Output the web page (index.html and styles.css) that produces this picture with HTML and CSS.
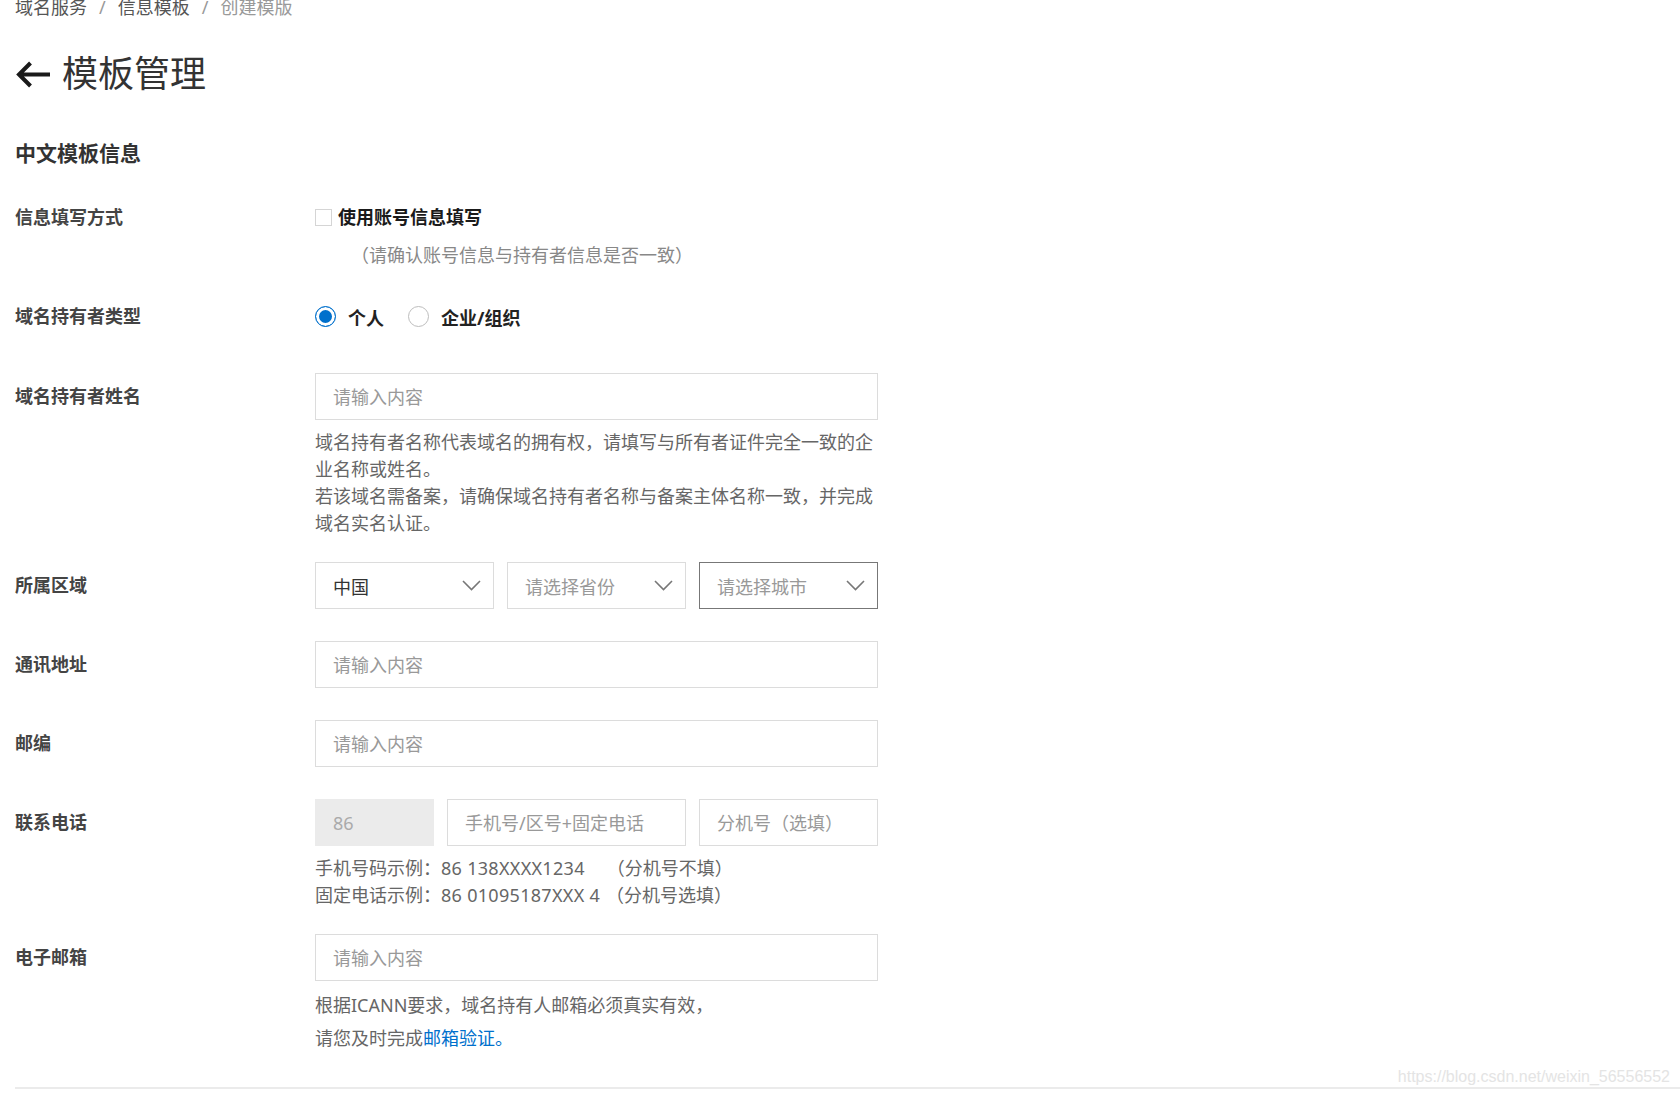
FILE: index.html
```html
<!DOCTYPE html>
<html lang="zh-CN">
<head>
    <meta charset="UTF-8">
    <meta name="viewport" content="width=device-width, initial-scale=1.0">
    <title>模板管理</title>
    <link rel="stylesheet" href="styles.css">
</head>
<body>
<div class="page">

    <div class="breadcrumb">
        <span>域名服务</span><span class="sep">/</span><span>信息模板</span><span class="sep">/</span><span class="current">创建模版</span>
    </div>

    <div class="page-title">
        <svg class="back-icon" width="36" height="27" viewBox="0 0 36 27">
            <path d="M35 13.5H4M15.5 2L4 13.5 15.5 25" fill="none" stroke="#1a1a1a" stroke-width="4"/>
        </svg>
        <h1>模板管理</h1>
    </div>

    <h2 class="section-title">中文模板信息</h2>

    <div class="form">
        <div class="row row-check">
            <div class="row-label line">信息填写方式</div>
            <div class="row-field">
                <label class="checkbox"><span class="box"></span>使用账号信息填写</label>
                <div class="check-note">（请确认账号信息与持有者信息是否一致）</div>
            </div>
        </div>

        <div class="row row-radio">
            <div class="row-label line">域名持有者类型</div>
            <div class="row-field radio-group">
                <label class="radio"><span class="dot checked"></span>个人</label>
                <label class="radio"><span class="dot"></span>企业/组织</label>
            </div>
        </div>

        <div class="row row-help">
            <div class="row-label">域名持有者姓名</div>
            <div class="row-field">
                <input class="input" type="text" placeholder="请输入内容">
                <div class="help">
                    域名持有者名称代表域名的拥有权，请填写与所有者证件完全一致的企业名称或姓名。<br>
                    若该域名需备案，请确保域名持有者名称与备案主体名称一致，并完成域名实名认证。
                </div>
            </div>
        </div>

        <div class="row">
            <div class="row-label">所属区域</div>
            <div class="row-field select-group">
                <div class="select filled">中国
                    <svg class="chevron" width="19" height="11" viewBox="0 0 19 11"><path d="M1 1l8.5 8.5L18 1" fill="none" stroke="#777" stroke-width="1.6"/></svg>
                </div>
                <div class="select">请选择省份
                    <svg class="chevron" width="19" height="11" viewBox="0 0 19 11"><path d="M1 1l8.5 8.5L18 1" fill="none" stroke="#777" stroke-width="1.6"/></svg>
                </div>
                <div class="select active">请选择城市
                    <svg class="chevron" width="19" height="11" viewBox="0 0 19 11"><path d="M1 1l8.5 8.5L18 1" fill="none" stroke="#777" stroke-width="1.6"/></svg>
                </div>
            </div>
        </div>

        <div class="row">
            <div class="row-label">通讯地址</div>
            <div class="row-field">
                <input class="input" type="text" placeholder="请输入内容">
            </div>
        </div>

        <div class="row">
            <div class="row-label">邮编</div>
            <div class="row-field">
                <input class="input" type="text" placeholder="请输入内容">
            </div>
        </div>

        <div class="row row-help">
            <div class="row-label">联系电话</div>
            <div class="row-field">
                <div class="phone-group">
                    <input class="input phone-code" type="text" value="86" disabled>
                    <input class="input phone-num" type="text" placeholder="手机号/区号+固定电话">
                    <input class="input phone-ext" type="text" placeholder="分机号（选填）">
                </div>
                <div class="help">
                    手机号码示例：<span class="num">86 138XXXX1234</span><span class="gap-wide"></span>（分机号不填）<br>
                    固定电话示例：<span class="num">86 01095187XXX 4</span><span class="gap-narrow"></span>（分机号选填）
                </div>
            </div>
        </div>

        <div class="row">
            <div class="row-label">电子邮箱</div>
            <div class="row-field">
                <input class="input" type="text" placeholder="请输入内容">
                <div class="help help-email">
                    根据ICANN要求，域名持有人邮箱必须真实有效，<br>
                    请您及时完成<a class="link" href="#">邮箱验证。</a>
                </div>
            </div>
        </div>

        <div class="form-end"></div>
    </div>

    <div class="watermark">https://blog.csdn.net/weixin_56556552</div>
</div>
</body>
</html>
```

FILE: styles.css
```css
* {
    margin: 0;
    padding: 0;
    box-sizing: border-box;
}

body {
    font-family: "Noto Sans", "Noto Sans CJK SC", sans-serif;
    font-size: 18px;
    color: #333;
    background-color: #fff;
}

.page {
    position: relative;
    height: 1094px;
    padding-left: 15px;
    overflow: hidden;
}

/* fil d'ariane */
.breadcrumb {
    line-height: 15px;
    color: #555;
}

.breadcrumb .sep {
    margin: 0 12px;
    color: #999;
}

.breadcrumb .current {
    color: #999;
}

.page-title {
    display: flex;
    align-items: center;
    gap: 11px;
    margin-top: 37px;
    height: 44px;
}

.page-title h1 {
    font-size: 36px;
    font-weight: normal;
    line-height: 44px;
    color: #333;
}

.section-title {
    margin-top: 43px;
    font-size: 21px;
    font-weight: bold;
    line-height: 28px;
    color: #333;
}

/* formulaire */
.form {
    margin-top: 37px;
}

.row {
    display: flex;
    margin-bottom: 32px;
}

.row-check {
    margin-bottom: 34px;
}

.row-radio {
    margin-bottom: 43px;
}

.row-help {
    margin-bottom: 25px;
}

.row-label {
    width: 300px;
    flex-shrink: 0;
    font-weight: bold;
    line-height: 47px;
    color: #444;
}

.row-label.line {
    line-height: 27px;
}

.row-field {
    width: 563px;
}

.checkbox {
    display: flex;
    align-items: center;
    line-height: 27px;
    font-weight: bold;
    color: #1a1a1a;
}

.checkbox .box {
    width: 17px;
    height: 17px;
    border: 1px solid #d5d5d5;
    margin-right: 6px;
}

.check-note {
    margin-top: 11px;
    padding-left: 36px;
    line-height: 27px;
    color: #888;
}

.radio-group {
    display: flex;
    align-items: center;
    height: 27px;
}

.radio {
    display: flex;
    align-items: center;
    margin-right: 24px;
    font-weight: bold;
    color: #222;
}

.radio .dot {
    width: 21px;
    height: 21px;
    border-radius: 50%;
    border: 1px solid #bdbdbd;
    margin-right: 12px;
    background-color: #fff;
}

.radio .dot.checked {
    border-color: #0070cc;
    background-color: #0070cc;
    box-shadow: inset 0 0 0 3px #fff;
}

.input {
    display: block;
    width: 100%;
    height: 47px;
    padding: 0 17px;
    border: 1px solid #dcdcdc;
    border-radius: 0;
    font: inherit;
    color: #333;
    background-color: #fff;
    outline: none;
}

.input::placeholder {
    color: #999;
}

.help {
    margin-top: 9px;
    line-height: 27px;
    color: #666;
}

.help .num {
    letter-spacing: 0.3px;
}

.help-email {
    margin-top: 8px;
    line-height: 33px;
}

.link {
    color: #0070cc;
    text-decoration: none;
}

.gap-wide {
    display: inline-block;
    width: 22px;
}

.gap-narrow {
    display: inline-block;
    width: 6px;
}

.select-group {
    display: flex;
    gap: 13px;
}

.select {
    flex: 0 0 179px;
    height: 47px;
    display: flex;
    align-items: center;
    justify-content: space-between;
    padding: 0 12px 0 17px;
    border: 1px solid #dcdcdc;
    color: #999;
}

.select.filled {
    color: #333;
}

.select.active {
    border-color: #777;
}

.phone-group {
    display: flex;
    gap: 13px;
}

.phone-code {
    width: 119px;
    background-color: #ebebeb;
    border-color: #ebebeb;
    color: #aaa;
}

.phone-num {
    width: 239px;
}

.phone-ext {
    width: 179px;
}

.form-end {
    border-top: 2px solid #ebebeb;
}

.watermark {
    position: absolute;
    right: 10px;
    bottom: 8px;
    font-family: "Liberation Sans", sans-serif;
    font-size: 16px;
    color: #e4e4e4;
}
```
